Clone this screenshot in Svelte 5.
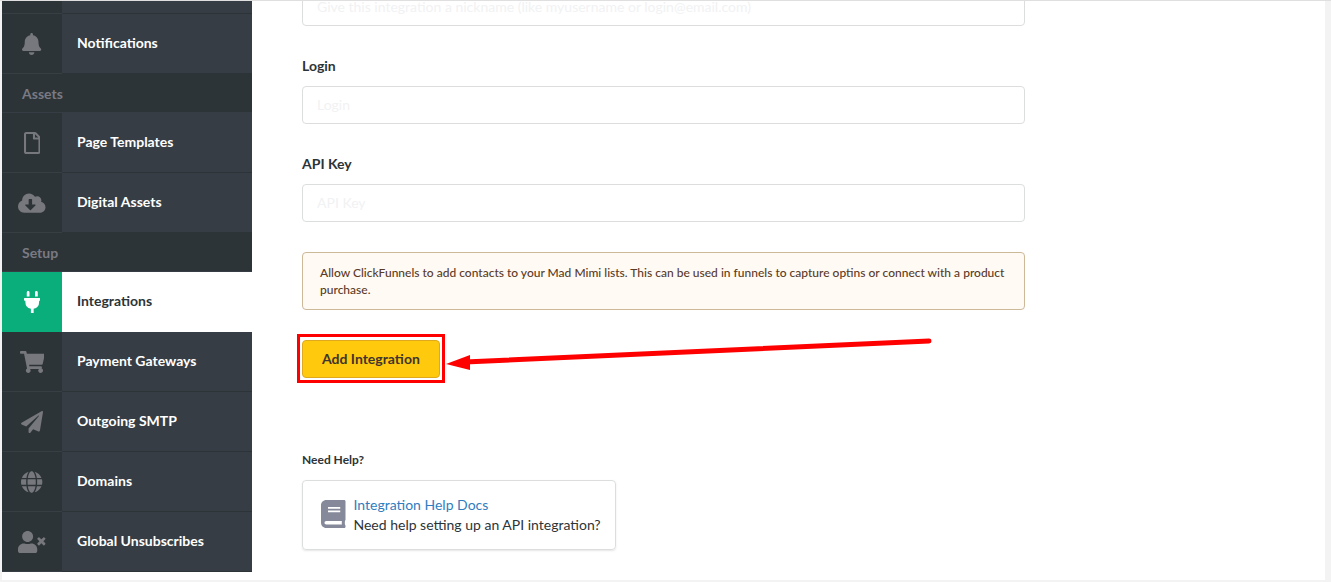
<script>
  const icons = {
    bell: { w: 448, d: 'M224 512c35.32 0 63.97-28.65 63.97-64H160.03c0 35.35 28.65 64 63.97 64zm215.39-149.71c-19.32-20.76-55.47-51.99-55.47-154.29 0-77.7-54.48-139.9-127.94-155.16V32c0-17.67-14.32-32-31.98-32s-31.98 14.33-31.98 32v20.84C118.56 68.1 64.08 130.3 64.08 208c0 102.3-36.15 133.53-55.47 154.29-6 6.45-8.66 14.16-8.61 21.71.11 16.4 12.98 32 32.1 32h383.8c19.12 0 32-15.6 32.1-32 .05-7.55-2.61-15.27-8.61-21.71z' },
    file: { w: 384, d: 'M369.9 97.9L286 14C277 5 264.8-.1 252.1-.1H48C21.5 0 0 21.5 0 48v416c0 26.5 21.5 48 48 48h288c26.5 0 48-21.5 48-48V131.9c0-12.7-5.1-25-14.1-34zM332.1 128H256V51.9l76.1 76.1zM48 464V48h160v104c0 13.3 10.7 24 24 24h104v288H48z' },
    cloud: { w: 640, d: 'M537.6 226.6c4.1-10.7 6.4-22.4 6.4-34.6 0-53-43-96-96-96-19.7 0-38.1 6-53.3 16.2C367 64.2 315.3 32 256 32c-88.4 0-160 71.6-160 160 0 2.7.1 5.4.2 8.1C40.2 219.8 0 273.2 0 336c0 79.5 64.5 144 144 144h368c70.7 0 128-57.3 128-128 0-61.9-44-113.6-102.4-125.4zm-132.9 88.7L299.3 420.7c-6.2 6.2-16.4 6.2-22.6 0L171.3 315.3c-10.1-10.1-2.9-27.3 11.3-27.3H248V176c0-8.8 7.2-16 16-16h48c8.8 0 16 7.2 16 16v112h65.4c14.2 0 21.4 17.2 11.3 27.3z' },
    plug: { w: 384, d: 'M320 32a32 32 0 0 0-64 0v96h64Zm48 128H16A16 16 0 0 0 0 176v32a16 16 0 0 0 16 16H32v32A160.07 160.07 0 0 0 160 412.8V512h64V412.8A160.07 160.07 0 0 0 352 256V224h16a16 16 0 0 0 16-16V176A16 16 0 0 0 368 160ZM128 32a32 32 0 0 0-64 0v96h64Z' },
    cart: { w: 576, d: 'M528.12 301.319l47.273-208C578.806 78.301 567.391 64 551.99 64H159.208l-9.166-44.81C147.758 8.021 137.93 0 126.529 0H24C10.745 0 0 10.745 0 24v16c0 13.255 10.745 24 24 24h69.883l70.248 343.435C147.325 417.1 136 435.222 136 456c0 30.928 25.072 56 56 56s56-25.072 56-56c0-15.674-6.447-29.835-16.824-40h209.647C430.447 426.165 424 440.326 424 456c0 30.928 25.072 56 56 56s56-25.072 56-56c0-22.172-12.888-41.332-31.579-50.405l5.517-24.276c3.413-15.018-8.002-29.319-23.403-29.319H218.117l-6.545-32h293.145c11.206 0 20.92-7.754 23.403-18.681z' },
    plane: { w: 512, d: 'M476 3.2L12.5 270.6c-18.1 10.4-15.8 35.6 2.2 43.2L121 358.4l287.3-253.2c5.5-4.9 13.3 2.6 8.6 8.3L176 407v80.5c0 23.6 28.5 32.9 42.5 15.8L282 426l124.6 52.2c14.2 6 30.4-2.9 33-18.2l72-432C515 7.8 493.3-6.8 476 3.2z' },
    globe: { w: 496, d: 'M336.5 160C322 70.7 287.8 8 248 8s-74 62.7-88.5 152h177zM152 256c0 22.2 1.2 43.5 3.3 64h185.3c2.1-20.5 3.3-41.8 3.3-64s-1.2-43.5-3.3-64H155.3c-2.1 20.5-3.3 41.8-3.3 64zm324.7-96c-28.6-67.9-86.5-120.4-158-141.6 24.4 33.8 41.2 84.7 50 141.6h108zM177.2 18.4C105.8 39.6 47.8 92.1 19.3 160h108c8.7-56.9 25.5-107.8 49.9-141.6zM487.4 192H372.7c2.1 21 3.3 42.5 3.3 64s-1.2 43-3.3 64h114.6c5.5-20.5 8.6-41.8 8.6-64s-3.1-43.5-8.5-64zM120 256c0-21.5 1.2-43 3.3-64H8.6C3.2 212.5 0 233.8 0 256s3.2 43.5 8.6 64h114.6c-2-21-3.2-42.5-3.2-64zm39.5 96c14.5 89.3 48.7 152 88.5 152s74-62.7 88.5-152h-177zm159.3 141.6c71.4-21.2 129.4-73.7 158-141.6h-108c-8.8 56.9-25.6 107.8-50 141.6zM19.3 352c28.6 67.9 86.5 120.4 158 141.6-24.4-33.8-41.2-84.7-50-141.6h-108z' },
    user: { w: 640, d: 'M589.6 240l45.6-45.6c6.3-6.3 6.3-16.5 0-22.8l-22.8-22.8c-6.3-6.3-16.5-6.3-22.8 0L544 194.4l-45.6-45.6c-6.3-6.3-16.5-6.3-22.8 0l-22.8 22.8c-6.3 6.3-6.3 16.5 0 22.8l45.6 45.6-45.6 45.6c-6.3 6.3-6.3 16.5 0 22.8l22.8 22.8c6.3 6.3 16.5 6.3 22.8 0l45.6-45.6 45.6 45.6c6.3 6.3 16.5 6.3 22.8 0l22.8-22.8c6.3-6.3 6.3-16.5 0-22.8L589.6 240zM224 256c70.7 0 128-57.3 128-128S294.7 0 224 0 96 57.3 96 128s57.3 128 128 128zm89.6 32h-16.7c-22.2 10.2-46.9 16-72.9 16s-50.6-5.8-72.9-16h-16.7C60.2 288 0 348.2 0 422.4V464c0 26.5 21.5 48 48 48h352c26.5 0 48-21.5 48-48v-41.6c0-74.2-60.2-134.4-134.4-134.4z' },
    book: { w: 448, d: 'M448 360V24c0-13.3-10.7-24-24-24H96C43 0 0 43 0 96v320c0 53 43 96 96 96h328c13.3 0 24-10.7 24-24v-16c0-7.5-3.5-14.3-8.9-18.7-4.2-15.4-4.2-59.3 0-74.7 5.4-4.3 8.9-11.1 8.9-18.6zM128 134c0-3.3 2.7-6 6-6h212c3.3 0 6 2.7 6 6v20c0 3.3-2.7 6-6 6H134c-3.3 0-6-2.7-6-6v-20zm0 64c0-3.3 2.7-6 6-6h212c3.3 0 6 2.7 6 6v20c0 3.3-2.7 6-6 6H134c-3.3 0-6-2.7-6-6v-20zm253.4 250H96c-17.7 0-32-14.3-32-32 0-17.6 14.4-32 32-32h285.4c-1.9 17.1-1.9 46.9 0 64z' }
  };

  const groups = [
    { items: [{ label: 'Notifications', icon: 'bell' }] },
    { title: 'Assets', items: [
      { label: 'Page Templates', icon: 'file' },
      { label: 'Digital Assets', icon: 'cloud' }
    ] },
    { title: 'Setup', items: [
      { label: 'Integrations', icon: 'plug', active: true },
      { label: 'Payment Gateways', icon: 'cart' },
      { label: 'Outgoing SMTP', icon: 'plane' },
      { label: 'Domains', icon: 'globe' },
      { label: 'Global Unsubscribes', icon: 'user' }
    ] }
  ];
</script>

{#snippet glyph(name)}
  <svg class="glyph" viewBox="0 0 {icons[name].w} 512" aria-hidden="true"><path d={icons[name].d} /></svg>
{/snippet}

<div class="page">
  <div class="panel">
    <nav class="sidebar">
      <div class="row partial"><span class="cell"></span><span class="label"></span></div>
      {#each groups as group}
        {#if group.title}<h2>{group.title}</h2>{/if}
        {#each group.items as item}
          <a class="row" class:active={item.active} href="#{item.icon}">
            <span class="cell">{@render glyph(item.icon)}</span>
            <span class="label">{item.label}</span>
          </a>
        {/each}
      {/each}
    </nav>

    <main>
      <form onsubmit={(e) => e.preventDefault()}>
        <input class="scrolled" type="text" aria-label="Nickname" placeholder="Give this integration a nickname (like myusername or login@email.com)" />
        <label for="login">Login</label>
        <input id="login" type="text" placeholder="Login" />
        <label for="key">API Key</label>
        <input id="key" type="text" placeholder="API Key" />
        <p class="notice">Allow ClickFunnels to add contacts to your Mad Mimi lists. This can be used in funnels to capture optins or connect with a product purchase.</p>
        <div class="submit">
          <button type="submit">Add Integration</button>
          <span class="frame"></span>
          <svg class="arrow" width="490" height="36" viewBox="0 0 490 36" aria-hidden="true">
            <path d="M20 26L484 5" stroke="#f00" stroke-width="5" stroke-linecap="round" />
            <path d="M1 28L25 19V34Z" fill="#f00" />
          </svg>
        </div>
      </form>

      <h3>Need Help?</h3>
      <div class="card">
        {@render glyph('book')}
        <div>
          <a href="#docs">Integration Help Docs</a>
          <p>Need help setting up an API integration?</p>
        </div>
      </div>
    </main>
  </div>
</div>

<style>
  :global(body) { margin: 0; background: #f3f3f3; }
  .page {
    box-sizing: border-box;
    min-height: 100vh;
    display: flex;
    padding: 0 6px 2px 2px;
    border-top: 1px solid #dfdfdf;
    font-family: Lato, "Open Sans", sans-serif;
    font-size: 14px;
    line-height: 20px;
    color: #2d3438;
  }
  .panel { flex: 1; display: flex; align-items: flex-start; background: #fff; overflow: hidden; }
  .sidebar { flex: none; width: 250px; background: #2c3437; }
  .row {
    display: flex;
    height: 60px;
    color: #fff;
    font-weight: 700;
    text-decoration: none;
  }
  .partial { height: 13px; }
  .cell, .label { box-sizing: border-box; display: flex; align-items: center; }
  .cell {
    width: 60px;
    justify-content: center;
    background: #2c3437;
    border-bottom: 1px solid #383f44;
    color: #77777e;
  }
  .label { flex: 1; padding: 0 0 2px 15px; background: #363d44; border-bottom: 1px solid #2c3437; }
  .active .cell { background: #09ae7a; border-color: #09ae7a; color: #fff; }
  .active .label { background: #fff; border-color: #fff; color: #2d3438; }
  .glyph { height: 22px; fill: currentColor; }
  h2 {
    box-sizing: border-box;
    height: 39px;
    margin: 0;
    padding: 10px 20px;
    border-bottom: 1px solid #363d44;
    color: #7a7a84;
    font-size: 14px;
    font-weight: 700;
  }
  main { flex: 1; padding: 0 50px 30px; }
  form { display: flex; flex-direction: column; max-width: 723px; }
  input {
    box-sizing: border-box;
    width: 100%;
    height: 38px;
    margin: 0 0 30px;
    padding: 0 14px 2px;
    border: 1px solid #dcdede;
    border-radius: 4px;
    background: #fff;
    font: inherit;
    color: inherit;
  }
  input::placeholder { color: #f1f2f3; opacity: 1; }
  .scrolled { margin-top: -13px; }
  label { margin-bottom: 10px; font-weight: 700; }
  .notice {
    margin: 0;
    padding: 11px 17px;
    border: 1px solid #cdb898;
    border-radius: 4px;
    background: #fffaf3;
    color: #5a3b28;
    font-size: 12px;
    font-weight: 500;
    line-height: 17px;
  }
  .submit { position: relative; align-self: flex-start; margin-top: 30px; }
  button {
    display: block;
    height: 38px;
    padding: 0 19px;
    border: 1px solid #e0a81c;
    border-radius: 4px;
    background: #ffc90e;
    color: #40342e;
    font: inherit;
    font-weight: 700;
  }
  .frame { position: absolute; inset: -6px -5px -5px; border: 3px solid #f00; pointer-events: none; }
  .arrow { position: absolute; left: 143px; top: -4px; fill: none; pointer-events: none; }
  h3 { margin: 72px 0 10px; font-size: 12px; font-weight: 700; }
  .card {
    box-sizing: border-box;
    display: flex;
    gap: 8px;
    width: fit-content;
    padding: 14px 14px 14px 18px;
    border: 1px solid #dcdede;
    border-radius: 4px;
    box-shadow: 0 1px 2px #0000001a;
  }
  .card .glyph { height: 28px; margin-top: 5px; color: #85899a; }
  .card a { color: #2f7dc0; text-decoration: none; }
  .card p { margin: 0; }
</style>
